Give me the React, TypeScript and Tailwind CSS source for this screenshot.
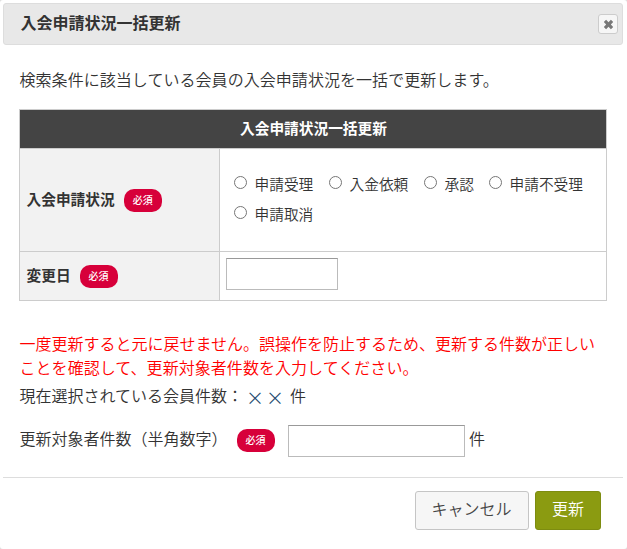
import { useState } from "react";

const statuses = [
  { label: "申請受理", width: "w-[95px]" },
  { label: "入金依頼", width: "w-[95px]" },
  { label: "承認", width: "w-[65px]" },
  { label: "申請不受理", width: "w-[110px]" },
  { label: "申請取消", width: "w-[95px]" },
];

const RequiredBadge = () => (
  <span className="flex h-[23px] w-[38px] shrink-0 items-center justify-center rounded-[10px] bg-[#d7003a] pr-px text-[10px] font-medium leading-none text-white">
    必須
  </span>
);

const fieldClass =
  "block h-8 border border-[#bbb] border-t-[#999] bg-white px-2 text-base outline-none";

const App = () => {
  const [status, setStatus] = useState("");

  return (
    <div className="h-[549px] w-[627px] bg-[#ddd] font-['Noto_Sans_CJK_JP',sans-serif] text-base font-[350] text-[#333]">
      <div className="flex h-full flex-col overflow-hidden rounded-[3px] bg-white pt-[3px] pr-1 pl-[3px]">
        {/* Title bar */}
        <div className="flex h-[42px] shrink-0 items-center justify-between rounded-[3px] border border-[#ddd] bg-[#e8e8e8] pr-1 pl-[16.5px]">
          <h1 className="pb-[5px] leading-6 font-bold">入会申請状況一括更新</h1>
          <button
            type="button"
            aria-label="閉じる"
            className="flex size-5 items-center justify-center rounded-[3px] border border-[#ccc] bg-[#f6f6f6]"
          >
            <svg viewBox="0 0 10 10" className="size-[11px] fill-[#777]">
              <path d="M2.8 .7 5 2.9 7.2 .7 9.3 2.8 7.1 5 9.3 7.2 7.2 9.3 5 7.1 2.8 9.3 .7 7.2 2.9 5 .7 2.8Z" />
            </svg>
          </button>
        </div>

        {/* Content */}
        <div className="h-[432px] shrink-0 px-4 pt-[22px]">
          <p className="pl-[0.5px] leading-6 tracking-[0.05px]">検索条件に該当している会員の入会申請状況を一括で更新します。</p>

          <table className="mt-[18px] w-[588px] table-fixed border-collapse text-[14.7px] [&_td]:border [&_td]:border-[#ccc] [&_th]:border [&_th]:border-[#ccc]">
            <colgroup>
              <col className="w-[200px]" />
              <col />
            </colgroup>
            <thead>
              <tr className="h-[39px]">
                <th colSpan={2} className="bg-[#444] p-0 pb-0.5 pl-px leading-5 text-white">
                  入会申請状況一括更新
                </th>
              </tr>
            </thead>
            <tbody>
              <tr className="h-[103px]">
                <th className="bg-[#f2f2f2] p-0 pt-px pl-[6.5px]">
                  <div className="flex items-center gap-[9.5px]">
                    <span className="pb-[3px]">入会申請状況</span>
                    <RequiredBadge />
                  </div>
                </th>
                <td className="p-0 pl-3.5">
                  <div className="flex flex-wrap pb-0.5">
                    {statuses.map(({ label, width }) => (
                      <label key={label} className={`flex h-[30px] items-center whitespace-nowrap ${width}`}>
                        <input
                          type="radio"
                          name="status"
                          className="mr-[7.5px] mb-1 size-[13px] shrink-0"
                          checked={status === label}
                          onChange={() => setStatus(label)}
                        />
                        {label}
                      </label>
                    ))}
                  </div>
                </td>
              </tr>
              <tr className="h-[49px]">
                <th className="bg-[#f2f2f2] p-0 pt-px pl-[6.5px]">
                  <div className="flex items-center gap-[9.5px]">
                    <span className="pb-[3px]">変更日</span>
                    <RequiredBadge />
                  </div>
                </th>
                <td className="p-0 pb-1 pl-1.5">
                  <input type="text" aria-label="変更日" className={`${fieldClass} w-28`} />
                </td>
              </tr>
            </tbody>
          </table>

          <div className="mt-[30px] pl-[0.5px]">
            <p className="leading-6 text-[#f00]">
              一度更新すると元に戻せません。誤操作を防止するため、更新する件数が正しい
              <br />
              <span className="tracking-[0.05px]">ことを確認して、更新対象者件数を入力してください。</span>
            </p>
            <p className="mt-1 flex leading-6">
              現在選択されている会員件数：
              <span className="ml-[3px] flex items-center gap-1 pt-0.5 text-lg leading-6 text-[#234a6d]">
                <span className="w-4">×</span>
                <span className="w-4">×</span>
              </span>
              <span className="ml-2">件</span>
            </p>
            <div className="mt-[15px] flex h-8 items-center">
              <span className="w-[217.5px] pb-[5px]">更新対象者件数（半角数字）</span>
              <RequiredBadge />
              <input type="text" aria-label="更新対象者件数" className={`${fieldClass} mt-px ml-[13px] w-[177px]`} />
              <span className="ml-1 pb-[5px]">件</span>
            </div>
          </div>
        </div>

        {/* Footer */}
        <div className="flex flex-1 items-start justify-end gap-1.5 border-t border-[#ddd] pt-[13px] pr-[22px]">
          <button type="button" className="h-[39px] w-[114px] rounded-[3px] border border-[#c5c5c5] bg-[#f6f6f6] pr-px pb-[5px] text-[#454545]">
            キャンセル
          </button>
          <button type="button" className="h-[39px] w-[66px] rounded-[3px] border border-[#7d8c10] bg-[#8b9b11] pb-[5px] text-white">
            更新
          </button>
        </div>
      </div>
    </div>
  );
};

export default App;
